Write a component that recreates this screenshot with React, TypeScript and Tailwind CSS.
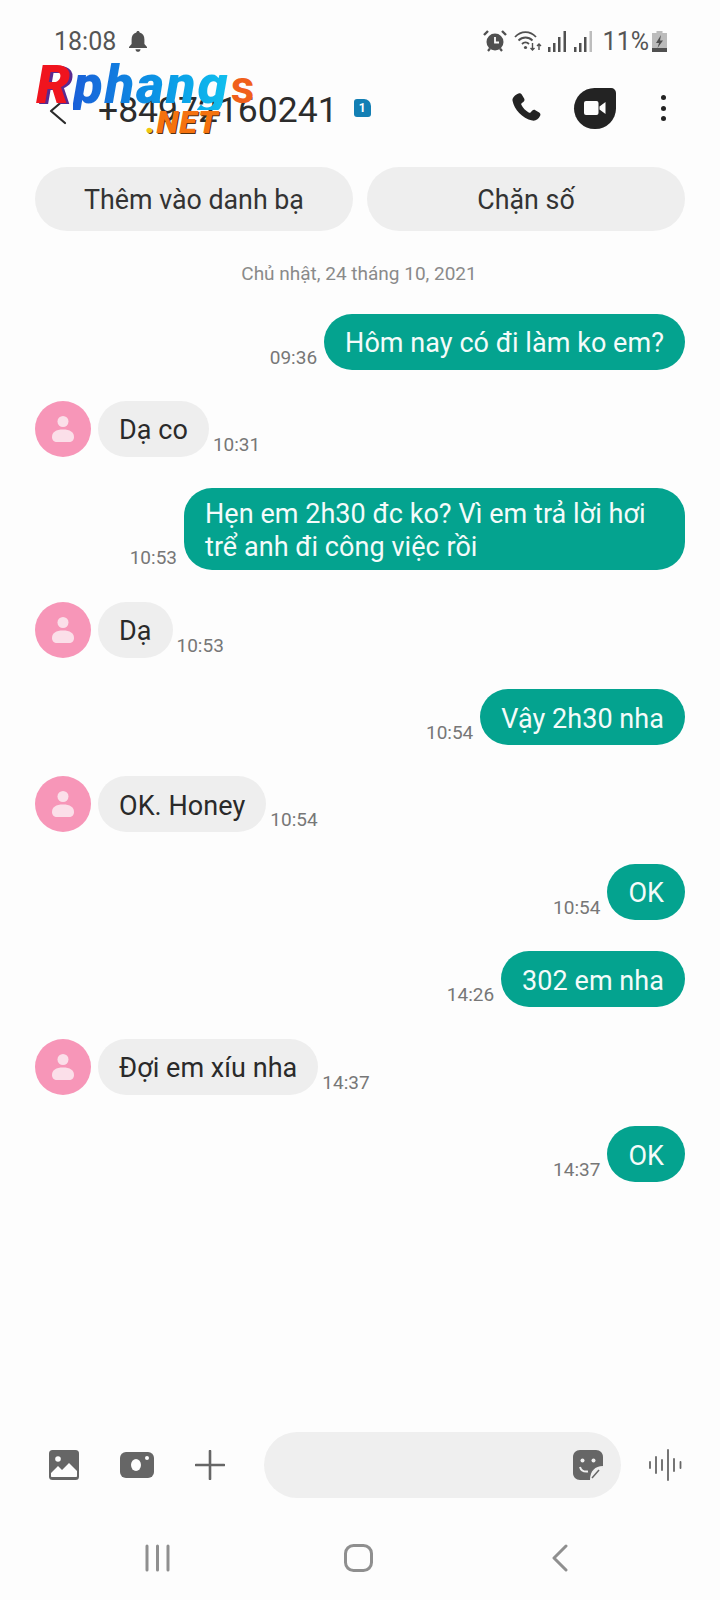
const font = { fontFamily: "Roboto, 'Noto Sans', sans-serif" };

type Msg = { side: "in" | "out"; time: string; lines: string[] };

const messages: Msg[] = [
  { side: "out", time: "09:36", lines: ["Hôm nay có đi làm ko em?"] },
  { side: "in", time: "10:31", lines: ["Dạ co"] },
  { side: "out", time: "10:53", lines: ["Hẹn em 2h30 đc ko? Vì em trả lời hơi", "trể anh đi công việc rồi"] },
  { side: "in", time: "10:53", lines: ["Dạ"] },
  { side: "out", time: "10:54", lines: ["Vậy 2h30 nha"] },
  { side: "in", time: "10:54", lines: ["OK. Honey"] },
  { side: "out", time: "10:54", lines: ["OK"] },
  { side: "out", time: "14:26", lines: ["302 em nha"] },
  { side: "in", time: "14:37", lines: ["Đợi em xíu nha"] },
  { side: "out", time: "14:37", lines: ["OK"] },
];

function Avatar() {
  return (
    <div className="w-[56px] h-[56px] rounded-full bg-[#f796b8] flex items-center justify-center shrink-0">
      <svg width="24" height="30" viewBox="0 0 24 30">
        <circle cx="12" cy="7.500" r="5.500" fill="#fbdfe9" />
        <path d="M1 23c0-5 4-7.500 11-7.500S23 18 23 23c0 3-2 5-5 5H6c-3 0-5-2-5-5z" fill="#fbdfe9" />
      </svg>
    </div>
  );
}

function Bubble({ msg }: { msg: Msg }) {
  const out = msg.side === "out";
  return (
    <div
      className={
        "rounded-[28px] min-h-[56px] flex items-center px-[21px] py-[6px] text-[27px] tracking-[0.05px] leading-[33px] " +
        (msg.lines.length > 1 ? "w-[501px] " : "") +
        (out ? "bg-[#04a38f] text-[#f4fbfa]" : "bg-[#eeeeee] text-[#2a2a2a]")
      }
    >
      <div className="pt-[4px]">
        {msg.lines.map((l) => (
          <div key={l}>{l}</div>
        ))}
      </div>
    </div>
  );
}

function Row({ msg }: { msg: Msg }) {
  const time = <span className="text-[19px] leading-[22px] text-[#777777] mb-[1px]">{msg.time}</span>;
  if (msg.side === "out") {
    return (
      <div className="flex justify-end items-end gap-[7px]">
        {time}
        <Bubble msg={msg} />
      </div>
    );
  }
  return (
    <div className="flex items-end">
      <Avatar />
      <div className="w-[7px]" />
      <Bubble msg={msg} />
      <div className="w-[4px]" />
      {time}
    </div>
  );
}

function StatusBar() {
  return (
    <div className="h-[82px] pt-[30px] pl-[54px] pr-[53px] flex items-start justify-between text-[#555555]">
      <div className="flex items-center h-[22px]">
        <span className="text-[25px] leading-[22px] pt-[2px]">18:08</span>
        <svg className="ml-[13px]" width="18" height="21" viewBox="0 0 18 21" fill="#505050">
          <path d="M9 0c1 0 1.600.7 1.600 1.600C14 2.400 15.400 5 15.400 8.500v4.500L18 16v1H0v-1l2.600-3V8.500C2.600 5 4 2.400 7.400 1.600 7.400.7 8 0 9 0z" />
          <path d="M6.500 18.200h5c0 1.500-1 2.600-2.500 2.600s-2.500-1.100-2.500-2.600z" />
        </svg>
      </div>
      <div className="flex items-center h-[22px]">
        <svg width="24" height="22" viewBox="0 0 24 22" fill="none">
          <circle cx="12" cy="12" r="8.500" fill="#505050" />
          <path d="M12 7v5.500h4" stroke="#fdfdfd" strokeWidth="1.800" />
          <path d="M1 5l4-4M23 5l-4-4" stroke="#505050" strokeWidth="2.400" />
          <path d="M5 21l2-2.500M19 21l-2-2.500" stroke="#505050" strokeWidth="2.200" />
        </svg>
        <svg className="ml-[7px]" width="28" height="22" viewBox="0 0 28 22" fill="none" stroke="#505050">
          <path d="M1 7c6-6.500 15-6.500 21 0" strokeWidth="1.800" />
          <path d="M4.500 10.500c4-4 10-4 14 0" strokeWidth="1.800" />
          <path d="M8 14c2-2 5-2 7 0" strokeWidth="1.800" />
          <circle cx="11.500" cy="17.500" r="1.600" fill="#505050" stroke="none" />
          <path d="M18.500 13v7M16.500 18l2 2 2-2M25 20v-6M23 16l2-2 2 2" strokeWidth="1.400" />
        </svg>
        <svg className="ml-[5px]" width="20" height="21" viewBox="0 0 20 21" fill="#505050">
          <rect x="1" y="16" width="2.500" height="5" />
          <rect x="6" y="12" width="2.500" height="9" />
          <rect x="11" y="6" width="2.500" height="15" />
          <rect x="16.500" y="0" width="2.500" height="21" />
        </svg>
        <svg className="ml-[6px]" width="20" height="21" viewBox="0 0 20 21" fill="#505050">
          <rect x="1" y="16" width="2.500" height="5" />
          <rect x="6" y="12" width="2.500" height="9" />
          <rect x="11" y="6" width="2.500" height="15" />
          <rect x="16.500" y="0" width="2.500" height="21" fill="#bdbdbd" />
        </svg>
        <span className="ml-[10px] text-[25px] leading-[22px] pt-[2px]">11%</span>
        <svg className="ml-[3px]" width="15" height="21" viewBox="0 0 15 21">
          <path d="M4.500 0h6v2H15v19H0V2h4.500z" fill="#bcbcbc" />
          <rect y="17" width="15" height="4" fill="#505050" />
          <path d="M9 4L4 12h3l-1.500 5L11 9.500H8z" fill="#505050" />
        </svg>
      </div>
    </div>
  );
}

function Header() {
  return (
    <div className="relative h-[52px] flex items-center pl-[49px] pr-[54px]">
      <svg className="mt-[5px]" width="18" height="28" viewBox="0 0 18 28" fill="none" stroke="#2a2a2a" strokeWidth="2.200" strokeLinecap="round" strokeLinejoin="round">
        <path d="M16 2L2 14l14 12" />
      </svg>
      <span className="ml-[31px] mt-[3px] text-[35.500px] leading-[52px] text-[#2c2c2c]">+84972160241</span>
      <div className="ml-[16px] w-[17px] h-[18px] rounded-[3px] rounded-tr-[7px] bg-[#137fb4] text-white text-[12px] leading-[18px] font-bold text-center">1</div>
      <div className="flex-1" />
      <svg width="32" height="32" viewBox="0 0 24 24" fill="#232323">
        <path d="M6.400 1.200c.9-.4 1.900-.1 2.400.7l1.800 3c.5.800.3 1.800-.4 2.400L8.700 8.500c-.3.300-.4.700-.2 1.100 1.100 2.400 3.200 4.600 5.800 5.900.4.200.8.100 1.100-.2l1.200-1.300c.6-.7 1.600-.9 2.400-.4l2.900 1.700c.9.500 1.200 1.600.7 2.500-1.100 2.400-3.300 4.100-5.900 3.600C9 19.900 3.200 13 1.900 6.600 1.500 4.300 3.900 2.200 6.400 1.200z" />
      </svg>
      <div className="ml-[32px] w-[42px] h-[41px] bg-[#232323] rounded-[21px] rounded-tr-[5px] flex items-center justify-center">
        <svg width="22" height="14" viewBox="0 0 22 14" fill="#fdfdfd">
          <rect x="0" y="0" width="14.500" height="14" rx="2" />
          <path d="M15.500 5.500L21.500 1v12l-6-4.500z" />
        </svg>
      </div>
      <div className="ml-[44px] w-[6px] flex flex-col items-center gap-[5.500px]">
        <div className="w-[5px] h-[5px] rounded-full bg-[#232323]" />
        <div className="w-[5px] h-[5px] rounded-full bg-[#232323]" />
        <div className="w-[5px] h-[5px] rounded-full bg-[#232323]" />
      </div>
      {/* watermark over the header */}
      <div className="absolute left-[36px] top-[-22px] pointer-events-none select-none">
        <div className="flex items-baseline italic font-black text-[54px] leading-[50px] tracking-[2px]">
          <span className="text-[#f0141e] [text-shadow:3px_1px_0_#5a2a90] mr-[1px]">R</span>
          <span className="bg-gradient-to-r from-[#1a5fd8] to-[#12c0ee] bg-clip-text text-transparent">phang</span>
          <span className="text-[#f0601a] not-italic font-bold text-[46px] ml-[1px]">s</span>
        </div>
        <div className="ml-[110px] mt-[-2px] flex italic font-black text-[32px] tracking-[1px] leading-[25px] text-[#f5720f] [text-shadow:1px_1px_0_#553311]">
          <span className="text-[#f2c811]">.</span>NET
        </div>
      </div>
    </div>
  );
}

function Composer() {
  return (
    <div className="h-[66px] mt-auto flex items-center pl-[49px] pr-[38px]">
      <svg width="30" height="30" viewBox="0 0 30 30">
        <rect width="30" height="30" rx="3.500" fill="#666666" />
        <circle cx="9" cy="9" r="2.800" fill="#fdfdfd" />
        <path d="M2 26v-3l7-7 4 4 7-7 8 8v5c0 .6-.4 1-1 1H3c-.6 0-1-.4-1-1z" fill="#fdfdfd" />
      </svg>
      <svg className="ml-[41px]" width="34" height="26" viewBox="0 0 34 26">
        <rect width="34" height="26" rx="6" fill="#666666" />
        <ellipse cx="16" cy="13" rx="5" ry="6" fill="#fdfdfd" />
        <circle cx="27" cy="6" r="2" fill="#fdfdfd" />
      </svg>
      <svg className="ml-[41px]" width="30" height="30" viewBox="0 0 30 30" stroke="#666666" strokeWidth="2.600" strokeLinecap="round">
        <path d="M15 1v28M1 15h28" />
      </svg>
      <div className="ml-[39px] w-[357px] h-[66px] rounded-[33px] bg-[#efefef] flex items-center justify-end pr-[18px]">
        <svg width="30" height="30" viewBox="0 0 30 30">
          <path d="M7 0h16c4 0 7 3 7 7v10L17 30H7c-4 0-7-3-7-7V7c0-4 3-7 7-7z" fill="#666666" />
          <circle cx="9.500" cy="10.500" r="2" fill="#efefef" />
          <circle cx="20.500" cy="10.500" r="2" fill="#efefef" />
          <path d="M7 17c1 3.500 4 5 8 4.500" stroke="#efefef" strokeWidth="2" fill="none" />
          <path d="M30 16c-8 0-13 5-13 14 8 0 13-5 13-14z" fill="#efefef" />
          <path d="M19 28l7-8" stroke="#666666" strokeWidth="1.500" />
        </svg>
      </div>
      <svg className="ml-[28px]" width="33" height="32" viewBox="0 0 33 32" stroke="#666666" strokeWidth="1.800" strokeLinecap="round">
        <path d="M1 13v6M7 8v16M13 11v10M19 1v30M25 10v12M31.500 13v6" />
      </svg>
    </div>
  );
}

function NavBar() {
  return (
    <div className="h-[102px] pt-[46px] relative">
      <div className="flex items-start">
        <svg className="ml-[145px]" width="25" height="28" viewBox="0 0 25 28" stroke="#8f8f8f" strokeWidth="3" strokeLinecap="round">
          <path d="M2 2v24M12.500 2v24M23 2v24" />
        </svg>
        <svg className="ml-[174px]" width="29" height="28" viewBox="0 0 29 28" fill="none" stroke="#8f8f8f" strokeWidth="3">
          <rect x="1.500" y="1.500" width="26" height="25" rx="8" />
        </svg>
        <svg className="ml-[179px]" width="16" height="28" viewBox="0 0 16 28" fill="none" stroke="#8f8f8f" strokeWidth="3" strokeLinecap="round" strokeLinejoin="round">
          <path d="M14 2L2 14l12 12" />
        </svg>
      </div>
    </div>
  );
}

export default function App() {
  return (
    <div className="w-[720px] h-[1600px] bg-[#fdfdfd] flex flex-col overflow-hidden" style={font}>
      <StatusBar />
      <Header />
      <div className="mt-[33px] px-[35px] grid grid-cols-2 gap-[14px]">
        <div className="h-[64px] rounded-[32px] bg-[#eeeeee] flex items-center justify-center text-[26.800px] text-[#333333] pt-[2px]">Thêm vào danh bạ</div>
        <div className="h-[64px] rounded-[32px] bg-[#eeeeee] flex items-center justify-center text-[26.800px] text-[#333333] pt-[2px]">Chặn số</div>
      </div>
      <div className="mt-[30px] text-center text-[19px] leading-[26px] text-[#8a8a8a] pr-[2px]">Chủ nhật, 24 tháng 10, 2021</div>
      <div className="mt-[26.500px] px-[35px] flex flex-col gap-[31.400px]">
        {messages.map((m, i) => (
          <Row key={i} msg={m} />
        ))}
      </div>
      <Composer />
      <NavBar />
    </div>
  );
}
